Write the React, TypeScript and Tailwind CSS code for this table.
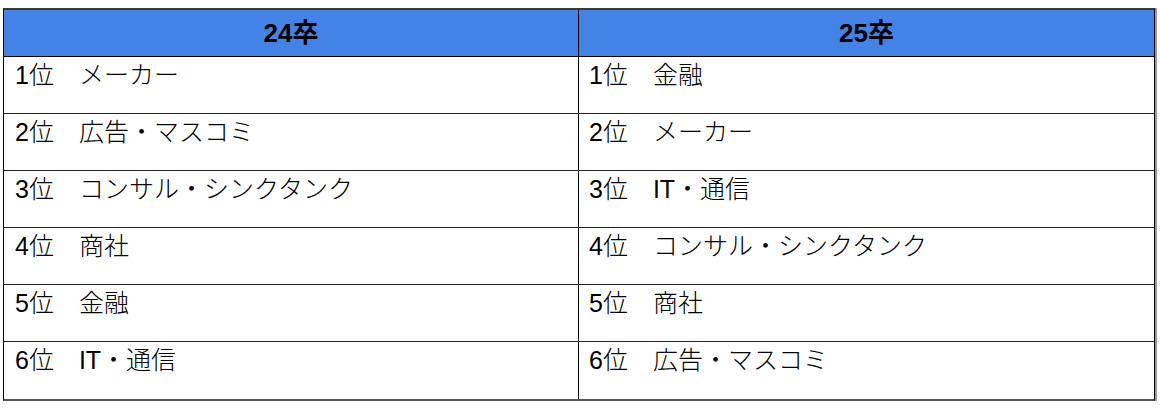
const rows: [string, string][] = [
  ["1位　メーカー", "1位　金融"],
  ["2位　広告・マスコミ", "2位　メーカー"],
  ["3位　コンサル・シンクタンク", "3位　IT・通信"],
  ["4位　商社", "4位　コンサル・シンクタンク"],
  ["5位　金融", "5位　商社"],
  ["6位　IT・通信", "6位　広告・マスコミ"],
];

export default function App() {
  return (
    <div
      className="w-[1160px] h-[412px] bg-white pt-[8px] pl-[3px]"
      style={{ fontFamily: '"Liberation Sans", "Noto Sans CJK JP", sans-serif' }}
    >
      <div className="w-[1152px] border-t-2 border-t-[#3a3a3a] border-l border-r border-black border-b-2 border-b-[#555] shadow-[2px_0_0_#9a9a9a]">
        <div className="grid grid-cols-[575px_1fr] h-[47px] bg-[#4483e6] border-b border-black">
          <div className="flex items-center justify-center text-[26px] font-bold text-black border-r border-black">
            24卒
          </div>
          <div className="flex items-center justify-center text-[26px] font-bold text-black">
            25卒
          </div>
        </div>
        {rows.map((r, i) => (
          <div
            key={i}
            className={
              "grid grid-cols-[575px_1fr] h-[57px] " +
              (i < rows.length - 1 ? "border-b border-[#222]" : "")
            }
          >
            <div className="border-r border-black pl-[11px] pt-[4px] text-[25px] leading-[28px] font-light text-black whitespace-pre">
              {r[0]}
            </div>
            <div className="pl-[10px] pt-[4px] text-[25px] leading-[28px] font-light text-black whitespace-pre">
              {r[1]}
            </div>
          </div>
        ))}
      </div>
    </div>
  );
}
